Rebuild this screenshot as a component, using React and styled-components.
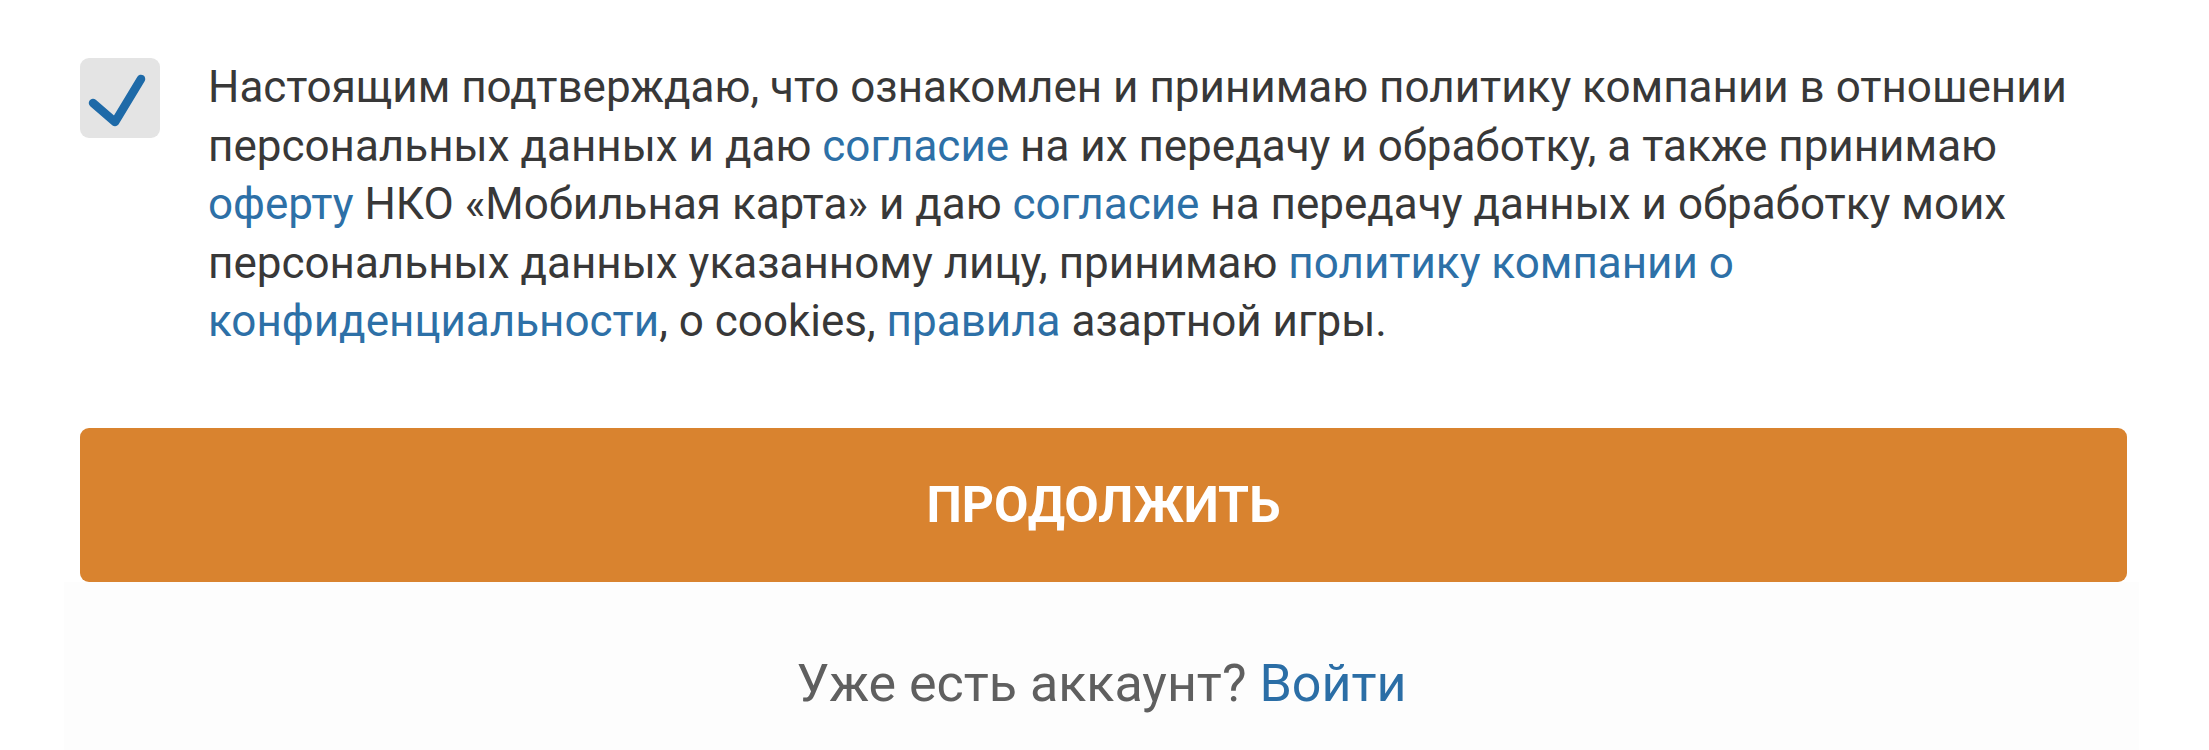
import React from "react";
import styled, { createGlobalStyle } from "styled-components";

const Global = createGlobalStyle`
  html, body { margin: 0; padding: 0; background: #ffffff; }
  body { font-family: Roboto, "Noto Sans", "Liberation Sans", sans-serif; }
`;

const Page = styled.div`
  width: 2209px;
  height: 750px;
  box-sizing: border-box;
  padding: 58px 82px 0 80px;
  display: flex;
  flex-direction: column;
  background: #ffffff;
`;

const ConsentRow = styled.label`
  display: flex;
  align-items: flex-start;
  gap: 48px;
`;

const CheckBox = styled.span`
  flex: 0 0 auto;
  width: 80px;
  height: 80px;
  border-radius: 9px;
  background: #e4e4e4;
  display: flex;
  align-items: center;
  justify-content: center;
`;

const ConsentText = styled.p`
  margin: 0;
  flex: 1 1 auto;
  font-size: 44px;
  line-height: 58.5px;
  color: #383838;
  white-space: nowrap;
`;

const Link = styled.a`
  color: #2d70a7;
  text-decoration: none;
`;

const Button = styled.button`
  margin-top: 77px;
  height: 154px;
  width: 100%;
  flex: 0 0 auto;
  border: none;
  border-radius: 9px;
  background: #d9832f;
  color: #ffffff;
  font-family: Roboto, "Noto Sans", "Liberation Sans", sans-serif;
  font-weight: 700;
  font-size: 50px;
  text-transform: uppercase;
  cursor: pointer;
`;

const Footer = styled.div`
  margin: 0 -12px 0 -16px;
  flex: 1 1 auto;
  background: #fdfdfd;
  display: flex;
  justify-content: center;
  padding-top: 72px;
  font-size: 52px;
  line-height: 60px;
  color: #5f5f5f;
`;

const FooterLink = styled.a`
  color: #2b6ea6;
  text-decoration: none;
  margin-left: 0.25em;
`;

function Check() {
  return (
    <svg width="80" height="80" viewBox="0 0 80 80" aria-hidden="true">
      <path
        d="M13 45 L35 64 L61 21"
        fill="none"
        stroke="#1e6aa8"
        strokeWidth="8.5"
        strokeLinecap="round"
        strokeLinejoin="round"
      />
    </svg>
  );
}

export default function App() {
  return (
    <>
      <Global />
      <Page>
        <ConsentRow>
          <CheckBox>
            <Check />
          </CheckBox>
          <ConsentText>
            Настоящим подтверждаю, что ознакомлен и принимаю политику компании в отношении
            <br />
            персональных данных и даю <Link href="#">согласие</Link> на их передачу и обработку, а также принимаю
            <br />
            <Link href="#">оферту</Link> НКО «Мобильная карта» и даю <Link href="#">согласие</Link> на передачу данных и обработку моих
            <br />
            персональных данных указанному лицу, принимаю <Link href="#">политику компании о</Link>
            <br />
            <Link href="#">конфиденциальности</Link>, о cookies, <Link href="#">правила</Link> азартной игры.
          </ConsentText>
        </ConsentRow>
        <Button type="button">Продолжить</Button>
        <Footer>
          Уже есть аккаунт?<FooterLink href="#">Войти</FooterLink>
        </Footer>
      </Page>
    </>
  );
}
